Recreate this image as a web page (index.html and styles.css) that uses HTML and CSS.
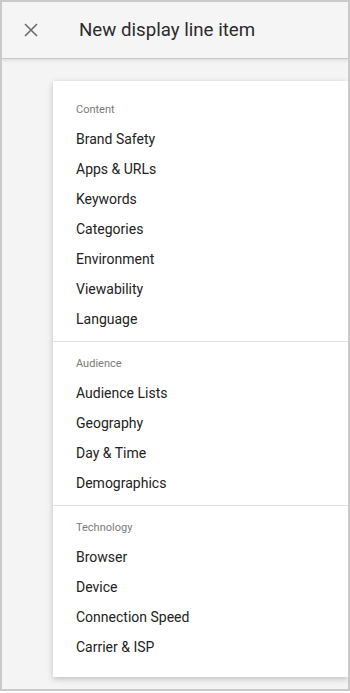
FILE: index.html
```html
<!DOCTYPE html>
<html lang="en">
<head>
  <meta charset="UTF-8" />
  <meta name="viewport" content="width=device-width, initial-scale=1.0" />
  <title>New display line item</title>
  <link rel="stylesheet" href="styles.css">
</head>
<body>
  <div class="frame">
    <header class="topbar">
      <button class="close" aria-label="Close">
        <svg width="14" height="14" viewBox="0 0 14 14">
          <path d="M1 1L13 13M13 1L1 13" stroke="#6b6b6b" stroke-width="1.6" fill="none" />
        </svg>
      </button>
      <h1 class="title">New display line item</h1>
    </header>

    <div class="content">
      <div class="menu">
        <div class="section">
          <div class="label">Content</div>
          <div class="item">Brand Safety</div>
          <div class="item">Apps &amp; URLs</div>
          <div class="item">Keywords</div>
          <div class="item">Categories</div>
          <div class="item">Environment</div>
          <div class="item">Viewability</div>
          <div class="item">Language</div>
        </div>
        <div class="section">
          <div class="label">Audience</div>
          <div class="item">Audience Lists</div>
          <div class="item">Geography</div>
          <div class="item">Day &amp; Time</div>
          <div class="item">Demographics</div>
        </div>
        <div class="section">
          <div class="label">Technology</div>
          <div class="item">Browser</div>
          <div class="item">Device</div>
          <div class="item">Connection Speed</div>
          <div class="item">Carrier &amp; ISP</div>
        </div>
      </div>
    </div>
  </div>
</body>
</html>
```

FILE: styles.css
```css
body {
  margin: 0;
  background: #fff;
  font-family: Roboto, "Liberation Sans", Arial, sans-serif;
}
.frame {
  box-sizing: border-box;
  width: 350px;
  height: 691px;
  border: 2px solid #cacaca;
  background: #f4f4f4;
  overflow: hidden;
  display: flex;
  flex-direction: column;
}
.topbar {
  box-sizing: border-box;
  height: 57px;
  flex-shrink: 0;
  display: flex;
  align-items: center;
  background: #f5f5f5;
  border-bottom: 1px solid #c8c8c8;
  box-shadow: 0 1px 4px rgba(0,0,0,0.12);
  position: relative;
  z-index: 1;
}
.close {
  width: 56px;
  height: 56px;
  display: flex;
  align-items: center;
  justify-content: center;
  padding: 0 0 0 2px;
  border: none;
  background: none;
}
.title {
  margin: 0 0 0 21px;
  font-size: 18.7px;
  font-weight: 400;
  color: #2b2b2b;
}
.content {
  flex: 1;
  padding: 22px 0 0 51px;
}
.menu {
  background: #fff;
  padding: 7px 0 8px;
  box-shadow: 0 2px 6px rgba(0,0,0,0.22);
}
.section {
  padding: 7px 0 6px;
}
.section + .section {
  border-top: 1px solid #e0e0e0;
}
.label,
.item {
  height: 30px;
  line-height: 30px;
  padding-left: 23px;
}
.label {
  font-size: 11px;
  color: #7a7a7a;
}
.item {
  font-size: 14px;
  line-height: 28px;
  padding-bottom: 2px;
  box-sizing: border-box;
  color: #222;
}
```
